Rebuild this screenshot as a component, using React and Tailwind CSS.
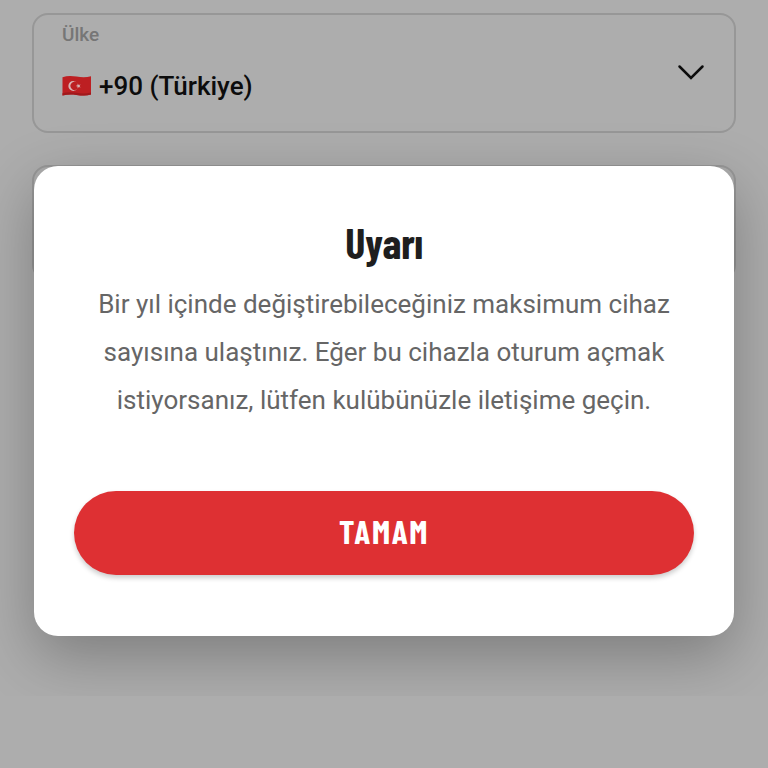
import { useId } from "react";

function TurkishFlag() {
  return (
    <svg viewBox="0 0 30 22" className="w-[30px] h-[22px] shrink-0" aria-hidden="true">
      <path
        d="M.5 2.200C5 .8 9.500 .9 14.500 1.600S24.500 2.500 29 1.200V19.600C24.500 21 19.500 20.600 14.500 19.900S5 19.200 .5 20.600Z"
        fill="#bd1f22"
      />
      <path d="M.5 18.200C5 16.800 9.500 17 14.500 17.800S24.500 18.700 29 17.400V19.600C24.500 21 19.500 20.600 14.500 19.900S5 19.200 .5 20.600Z" fill="#a0191c" />
      <path d="M15.200 7.700A5 5 0 1 0 15.200 14.100A4.100 4.100 0 1 1 15.200 7.700Z" fill="#d8b4b4" />
      <path d="M13.700 10.900L15.600 10.300V8.500L16.800 10L18.600 9.500L17.500 11L18.600 12.500L16.800 11.900L15.600 13.400V11.500Z" fill="#d8b4b4" />
    </svg>
  );
}

function CountryField() {
  const id = useId();

  return (
    <div className="relative flex h-[120px] flex-col rounded-2xl border-2 border-[#979797] px-7">
      <label htmlFor={id} className="pt-2 text-[19px] leading-6 font-medium text-[#767676]">
        Ülke
      </label>
      <div className="flex items-center gap-[7px] pt-[23px]">
        <TurkishFlag />
        <select
          id={id}
          defaultValue="TR"
          className="flex-1 appearance-none bg-transparent text-[26px] leading-8 font-medium text-[#0c0c0c] outline-none"
        >
          <option value="TR">+90 (Türkiye)</option>
        </select>
      </div>
      <svg
        viewBox="0 0 28 18"
        className="pointer-events-none absolute right-[29px] top-12 w-[28px] h-[18px]"
        fill="none"
        stroke="#0c0c0c"
        strokeWidth="2.500"
        strokeLinecap="round"
        aria-hidden="true"
      >
        <path d="M2.500 3.500L14 15L25.500 3.500" />
      </svg>
    </div>
  );
}

function WarningDialog() {
  return (
    <div className="absolute inset-x-0 top-0 overflow-hidden px-[34px] pt-[166px] pb-[60px]">
      <div
        role="alertdialog"
        aria-labelledby="dialog-title"
        aria-describedby="dialog-text"
        className="rounded-3xl bg-white px-10 pt-[52px] pb-[61px] text-center shadow-[0_20px_60px_rgba(0,0,0,0.28)]"
      >
        <h1
          id="dialog-title"
          className="font-['Barlow_Condensed','Roboto_Condensed',sans-serif] text-[42px] leading-[48px] font-bold text-[#1e1e1e]"
        >
          Uyarı
        </h1>
        <p id="dialog-text" className="pt-[14px] text-[26px] leading-[48px] text-[#666666]">
          Bir yıl içinde değiştirebileceğiniz maksimum cihaz sayısına ulaştınız. Eğer bu cihazla
          oturum açmak istiyorsanız, lütfen kulübünüzle iletişime geçin.
        </p>
        <button
          type="button"
          className="mt-[67px] h-[84px] w-full rounded-full bg-[#de3033] pb-0.5 font-['Barlow_Condensed','Roboto_Condensed',sans-serif] text-[33px] font-bold tracking-wider text-white shadow-[0_3px_5px_rgba(0,0,0,0.2)]"
        >
          TAMAM
        </button>
      </div>
    </div>
  );
}

export default function App() {
  return (
    <div className="relative min-h-screen bg-[#adadad] font-['Roboto',sans-serif]">
      <form className="flex flex-col gap-8 px-8 pt-[13px]">
        <CountryField />
        <input
          type="tel"
          aria-label="Telefon"
          className="h-[116px] w-full rounded-2xl border-2 border-[#979797] px-7 outline-none"
        />
      </form>
      <WarningDialog />
    </div>
  );
}
